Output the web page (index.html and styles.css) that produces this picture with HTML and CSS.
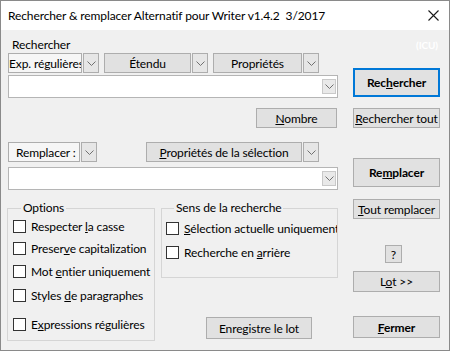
FILE: index.html
```html
<!DOCTYPE html>
<html lang="fr">
<head>
<meta charset="utf-8">
<link rel="stylesheet" href="styles.css">
</head>
<body>
<div class="window">
  <div class="titlebar">
    <span class="title">Rechercher &amp; remplacer Alternatif pour Writer v1.4.2&nbsp; 3/2017</span>
    <svg class="close" width="11" height="11" viewBox="0 0 11 11"><path d="M0.5 0.5 L10.5 10.5 M10.5 0.5 L0.5 10.5" stroke="#1a1a1a" stroke-width="1.1" fill="none"/></svg>
  </div>
  <div class="client">
    <div class="left">
      <div class="lbl">Rechercher</div>
      <div class="row row1">
        <div class="box list w-exp"><span>Exp. régulières</span></div>
        <div class="chev"><svg width="9" height="5" viewBox="0 0 9 5"><path d="M0.5 0.5 L4.5 4.5 L8.5 0.5" stroke="#707070" fill="none"/></svg></div>
        <div class="box btnbox w-ete"><span>Étendu</span></div>
        <div class="chev"><svg width="9" height="5" viewBox="0 0 9 5"><path d="M0.5 0.5 L4.5 4.5 L8.5 0.5" stroke="#707070" fill="none"/></svg></div>
        <div class="box btnbox w-pro"><span>Propriétés</span></div>
        <div class="chev"><svg width="9" height="5" viewBox="0 0 9 5"><path d="M0.5 0.5 L4.5 4.5 L8.5 0.5" stroke="#707070" fill="none"/></svg></div>
      </div>
      <div class="combo c1"><div class="cchev"><svg width="9" height="5" viewBox="0 0 9 5"><path d="M0.5 0.5 L4.5 4.5 L8.5 0.5" stroke="#707070" fill="none"/></svg></div></div>
      <div class="nrow"><div class="btn nombre"><span><u>N</u>ombre</span></div></div>
      <div class="row row2">
        <div class="box list w-rem"><span>Remplacer :</span></div>
        <div class="chev"><svg width="9" height="5" viewBox="0 0 9 5"><path d="M0.5 0.5 L4.5 4.5 L8.5 0.5" stroke="#707070" fill="none"/></svg></div>
        <div class="box btnbox w-sel"><span><u>P</u>ropriétés de la sélection</span></div>
        <div class="chev"><svg width="9" height="5" viewBox="0 0 9 5"><path d="M0.5 0.5 L4.5 4.5 L8.5 0.5" stroke="#707070" fill="none"/></svg></div>
      </div>
      <div class="combo c2"><div class="cchev"><svg width="9" height="5" viewBox="0 0 9 5"><path d="M0.5 0.5 L4.5 4.5 L8.5 0.5" stroke="#707070" fill="none"/></svg></div></div>
      <div class="groups">
        <fieldset class="grp opts">
          <legend>Options</legend>
          <div class="cb o1"><span class="sq"></span><span>Respecter <u>l</u>a casse</span></div>
          <div class="cb o2"><span class="sq"></span><span>Preser<u>v</u>e capitalization</span></div>
          <div class="cb o3"><span class="sq"></span><span>Mot <u>e</u>ntier uniquement</span></div>
          <div class="cb o4"><span class="sq"></span><span>Styles <u>d</u>e paragraphes</span></div>
          <div class="cb o5"><span class="sq"></span><span>E<u>x</u>pressions régulières</span></div>
        </fieldset>
        <div class="col2">
          <fieldset class="grp sens">
            <legend>Sens de la recherche</legend>
            <div class="cb s1"><span class="sq"></span><span><u>S</u>élection actuelle uniquement</span></div>
            <div class="cb s2"><span class="sq"></span><span>Recherche en <u>a</u>rrière</span></div>
          </fieldset>
          <div class="btn save"><span>Enregistre le lot</span></div>
        </div>
      </div>
    </div>
    <div class="right">
      <div class="icu">(ICU)</div>
      <div class="btn big def"><b>Rec<u>h</u>ercher</b></div>
      <div class="btn b-all"><span><u>R</u>echercher tout</span></div>
      <div class="btn big b-rep"><b>Re<u>m</u>placer</b></div>
      <div class="btn b-trep"><span><u>T</u>out remplacer</span></div>
      <div class="btn help"><span>?</span></div>
      <div class="btn b-lot"><span>L<u>o</u>t &gt;&gt;</span></div>
      <div class="btn b-close"><b><u>F</u>ermer</b></div>
    </div>
  </div>
</div>
</body>
</html>
```

FILE: styles.css
```css
* { box-sizing: border-box; margin: 0; padding: 0; }
html, body { width: 450px; height: 351px; overflow: hidden; background: #f0f0f0; }
body { font-family: Lato, "Open Sans", sans-serif; font-size: 12px; letter-spacing: -0.12px; color: #000; }

.window { width: 450px; height: 351px; border: 1px solid #8a8a8a; background: #f0f0f0; display: flex; flex-direction: column; }
.titlebar { height: 29px; background: #fff; display: flex; align-items: center; justify-content: space-between; padding-left: 7px; padding-right: 10px; flex: none; }
.title { font-size: 12px; line-height: 16px; padding-top: 1px; }
.close { display: block; }

.client { display: flex; padding-left: 7px; flex: 1; }
.left { width: 330px; display: flex; flex-direction: column; flex: none; }
.right { width: 87px; margin-left: 15px; display: flex; flex-direction: column; flex: none; }

.lbl { margin-top: 7px; padding-left: 4px; line-height: 15px; height: 15px; }

.row { display: flex; height: 20px; }
.row1 { margin-top: 1px; }
.row2 { margin-top: 14px; }
.box { height: 20px; border: 1px solid #adadad; display: flex; align-items: center; white-space: nowrap; overflow: hidden; }
.list { background: #f6f6f6; padding-left: 0; }
.btnbox { background: #e1e1e1; justify-content: center; }
.chev { width: 16px; height: 20px; margin-left: 1px; border: 1px solid #adadad; background: #e6e6e6; display: flex; align-items: center; justify-content: center; }
.chev svg, .cchev svg { display: block; }
.w-exp { width: 74px; }
.w-ete { width: 87px; margin-left: 5px; }
.w-pro { width: 89px; margin-left: 5px; }
.w-rem { width: 72px; padding-left: 7px; }
.w-sel { width: 156px; margin-left: 49px; }

.combo { height: 23px; width: 330px; border: 1px solid #b5b5b5; background: #fff; display: flex; justify-content: flex-end; align-items: center; padding-right: 1px; }
.c1 { margin-top: 2px; }
.c2 { margin-top: 5px; }
.cchev { width: 14px; height: 15px; border: 1px solid #c9c9c9; background: #e9e9e9; display: flex; align-items: center; justify-content: center; }

.nrow { display: flex; justify-content: flex-end; margin-top: 10px; padding-right: 1px; }

.btn { background: #e1e1e1; border: 1px solid #adadad; display: flex; align-items: center; justify-content: center; white-space: nowrap; overflow: hidden; height: 20px; }
.nombre { width: 81px; }

.groups { display: flex; margin-top: 11px; margin-left: -1px; }
.grp { border: 1px solid #d5d5d5; padding: 0 0 0 5px; min-width: 0; }
.grp legend { margin-left: 8px; padding: 0 2px; line-height: 14px; font-size: 12px; }
.opts { width: 152px; height: 140px; padding-top: 5px; }
.col2 { margin-left: 6px; display: flex; flex-direction: column; }
.sens { width: 177px; height: 77px; padding-top: 7px; padding-left: 4px; overflow: hidden; }
.save { width: 106px; height: 22px; margin-top: 39px; margin-left: 45px; }

.cb { display: flex; align-items: center; height: 13px; line-height: 13px; white-space: nowrap; }
.sq { width: 13px; height: 13px; border: 1px solid #333; background: #fff; margin-right: 5px; flex: none; }
.o2 { margin-top: 9px; }
.o3 { margin-top: 10px; }
.o4 { margin-top: 11px; }
.o5 { margin-top: 16px; }
.s2 { margin-top: 11px; }

.icu { height: 38px; padding-top: 10px; text-align: right; padding-right: 2px; color: #fff; font-size: 10px; font-weight: bold; line-height: 10px; }
.big { height: 29px; }
.def { border: 2px solid #0078d7; }
.b-all { margin-top: 11px; }
.b-rep { margin-top: 30px; }
.b-trep { margin-top: 12px; }
.help { width: 17px; height: 18px; margin-top: 26px; margin-left: 32px; }
.b-lot { margin-top: 8px; height: 21px; }
.b-close { margin-top: 24px; height: 22px; }
```
